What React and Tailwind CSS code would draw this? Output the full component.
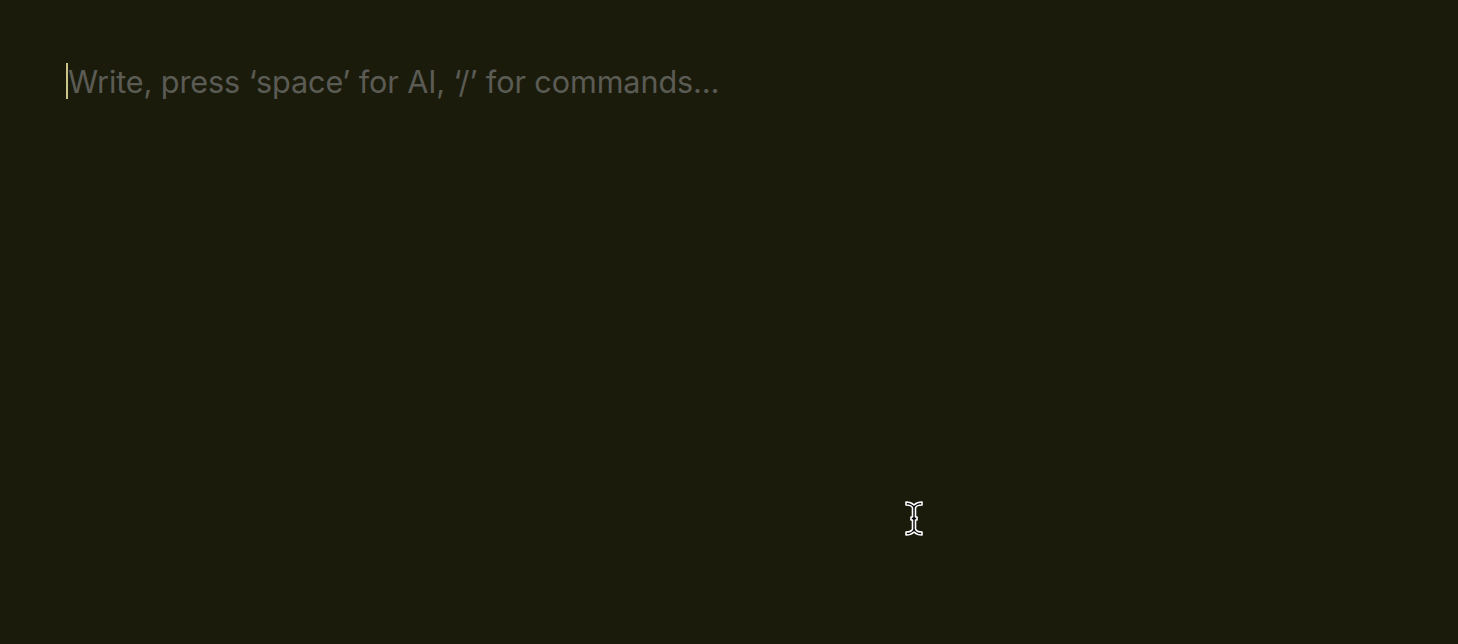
import React from "react";

function IBeam() {
  return (
    <svg width="22" height="40" viewBox="0 0 22 40" className="absolute left-[903px] top-[499px]">
      <path
        d="M3 3 C6 3 9 4 11 6 C13 4 16 3 19 3 L19 6 C16 6 13 7 12.5 9 L12.5 18 L14 18 L14 21 L12.5 21 L12.5 30 C13 32 16 33 19 33 L19 36 C16 36 13 35 11 33 C9 35 6 36 3 36 L3 33 C6 33 9 32 9.5 30 L9.5 21 L8 21 L8 18 L9.5 18 L9.5 9 C9 7 6 6 3 6 Z"
        fill="#000"
        stroke="#fff"
        strokeWidth="1.6"
        strokeLinejoin="round"
      />
    </svg>
  );
}

export default function App() {
  return (
    <div className="relative w-[1458px] h-[644px] bg-[#1b1b0c] overflow-hidden">
      <div className="pt-[63px] pl-[66px]">
        <div className="flex items-start h-[40px]">
          <span className="w-[2px] h-[36px] bg-[#c9c48a]"></span>
          <span
            className="text-[30.6px] leading-[40px] text-[#5b5b55] tracking-[-0.1px] -mt-[1px]"
            style={{ fontFamily: '"Inter", "Liberation Sans", sans-serif' }}
          >
            Write, press ‘space’ for AI, ‘/’ for commands…
          </span>
        </div>
      </div>
      <IBeam />
    </div>
  );
}
